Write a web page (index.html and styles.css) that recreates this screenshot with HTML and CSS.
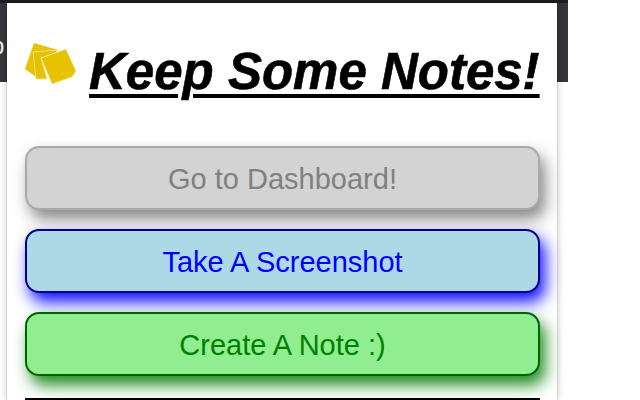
FILE: index.html
```html
<!DOCTYPE html>
<html lang="en">
<head>
<meta charset="utf-8">
<title>Keep Some Notes!</title>
<link rel="stylesheet" href="styles.css">
</head>
<body>
<div class="backdrop"><span class="peek">p</span></div>
<main class="popup">
  <header class="heading">
    <svg class="logo" viewBox="0 0 52 44" aria-hidden="true">
      <polygon points="9,0 33,7 26,11 16,14 14,36 0,26" fill="#e6c200"/>
      <polygon points="8,9 32,7 30,12 16,15 22,36 11,36" fill="#e6c200" stroke="#f3e08a" stroke-width="1"/>
      <polygon points="16,15 41,6 51,28 47,34 27,41" fill="#e6c200" stroke="#f6e9a8" stroke-width="1"/>
    </svg>
    <h1 class="title">Keep Some Notes!</h1>
  </header>
  <div class="actions">
    <button class="btn btn-gray">Go to Dashboard!</button>
    <button class="btn btn-blue">Take A Screenshot</button>
    <button class="btn btn-green">Create A Note :)</button>
    <hr class="rule">
  </div>
</main>
</body>
</html>
```
FILE: styles.css
```css
html, body {
  margin: 0;
  height: 100%;
  background: #fff;
  overflow: hidden;
  font-family: "Liberation Sans", Arial, sans-serif;
}
.backdrop {
  height: 82px;
  width: 568px;
  background: #35353b;
  border-top: 3px solid #1d1d20;
  box-sizing: border-box;
  color: #eee;
  font-size: 24px;
  line-height: 86px;
  overflow: hidden;
}
.peek { display: block; margin-left: -9px; }
.popup {
  position: absolute;
  left: 7px;
  top: 3px;
  width: 550px;
  height: 397px;
  background: #fff;
  box-shadow: 0 0 1px rgba(0,0,0,.5), 0 0 8px rgba(0,0,0,.22);
  padding: 0 18px;
  box-sizing: border-box;
}
.heading {
  display: flex;
  align-items: flex-start;
  height: 142.7px;
}
.logo {
  width: 52px;
  height: 44px;
  margin-top: 40px;
  flex: none;
}
.title {
  margin: 39px 0 0 12px;
  font-size: 51px;
  line-height: 60px;
  font-weight: 700;
  font-style: italic;
  text-decoration: underline;
  text-decoration-thickness: 4px;
  text-underline-offset: 5px;
  -webkit-text-stroke: 0.6px #000;
  white-space: nowrap;
  color: #000;
}
.actions {
  display: flex;
  flex-direction: column;
  gap: 19px;
  width: 515px;
}
.btn {
  height: 64px;
  border-radius: 14px;
  font: 400 29px "Liberation Sans", Arial, sans-serif;
  padding: 4px 0 0;
  border-width: 2px;
  border-style: solid;
}
.btn-gray {
  background: #d3d3d3;
  color: #808080;
  border-color: #a9a9a9;
  box-shadow: 5px 9px 16px rgba(128,128,128,.95);
}
.btn-blue {
  background: #add8e6;
  color: #0000ff;
  border-color: #00008b;
  box-shadow: 5px 9px 16px #0f0fff;
}
.btn-green {
  background: #90ee90;
  color: #008000;
  border-color: #006400;
  box-shadow: 5px 9px 16px #1e8a1e;
}
.rule {
  margin: 3px 0 0;
  border: 0;
  border-top: 2px solid #000;
  width: 515px;
}
```
